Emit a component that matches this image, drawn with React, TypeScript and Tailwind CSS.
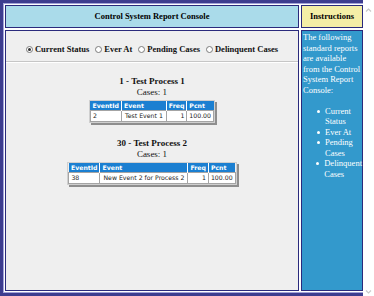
type EventRow = { id: string; event: string; freq: string; pcnt: string };

const processes: { title: string; cases: string; rows: EventRow[] }[] = [
  {
    title: '1 - Test Process 1',
    cases: 'Cases: 1',
    rows: [{ id: '2', event: 'Test Event 1', freq: '1', pcnt: '100.00' }],
  },
  {
    title: '30 - Test Process 2',
    cases: 'Cases: 1',
    rows: [{ id: '38', event: 'New Event 2 for Process 2', freq: '1', pcnt: '100.00' }],
  },
];

const Radio = ({ checked, label }: { checked?: boolean; label: string }) => (
  <span className="flex items-center">
    <span className="w-[7px] h-[7px] rounded-full border border-[#7c7c7c] bg-white flex items-center justify-center mr-[2px]">
      {checked && <span className="w-[3px] h-[3px] rounded-full bg-[#333]" />}
    </span>
    <span>{label}</span>
  </span>
);

const EventTable = ({ rows }: { rows: EventRow[] }) => (
  <div className="inline-block border border-[#cfcfcf] shadow-[2px_2px_0_#8e8e8e]">
    <table className="border-collapse font-['DejaVu_Sans',sans-serif] text-[6.2px] text-left">
      <thead>
        <tr className="bg-[#1b7fd1] text-white">
          <th className="px-[2px] leading-[9px] font-bold border-r border-white">EventId</th>
          <th className="px-[2px] leading-[9px] font-bold border-r border-white">Event</th>
          <th className="px-[2px] leading-[9px] font-bold border-r border-white">Freq</th>
          <th className="px-[2px] leading-[9px] font-bold">Pcnt</th>
        </tr>
      </thead>
      <tbody>
        {rows.map((r) => (
          <tr key={r.id} className="bg-white text-[#222]">
            <td className="px-[2px] py-[1px] leading-[8px] border border-[#a4a4a4]">{r.id}</td>
            <td className="px-[3px] py-[1px] leading-[8px] border border-[#a4a4a4] whitespace-nowrap">{r.event}</td>
            <td className="px-[2px] py-[1px] leading-[8px] border border-[#a4a4a4] text-right">{r.freq}</td>
            <td className="px-[2px] py-[1px] leading-[8px] border border-[#a4a4a4] text-right">{r.pcnt}</td>
          </tr>
        ))}
      </tbody>
    </table>
  </div>
);

export default function App() {
  return (
    <div className="w-[374px] h-[296px] flex bg-white overflow-hidden font-['Liberation_Serif',serif] text-black">
      {/* frame */}
      <div className="w-[363px] h-[296px] border-l-[3px] border-t-[3px] border-b-[3px] border-[#3d3d8f]">
        <div className="h-full border-l border-t border-b border-[#a3a3d9] bg-white p-[1px] pr-0 grid grid-cols-[294px_62px] grid-rows-[23px_1fr] gap-[2px]">
          <div className="border border-[#2a2a7c] bg-[#aadbea] flex items-center justify-center text-[8.5px] font-bold">
            Control System Report Console
          </div>
          <div className="border border-[#2a2a7c] bg-[#f4eea6] flex items-center justify-center text-[8.5px] font-bold">
            Instructions
          </div>

          {/* left body */}
          <div className="border border-[#2a2a7c] bg-[#efefef] flex flex-col">
            <div className="h-[30px] pt-[6px] flex items-center justify-center gap-[6px] text-[8.5px] font-bold text-[#111]">
              <Radio checked label="Current Status" />
              <Radio label="Ever At" />
              <Radio label="Pending Cases" />
              <Radio label="Delinquent Cases" />
            </div>
            <div className="border-t border-[#c6c6c6] border-b border-b-white" />

            <div className="flex flex-col items-center pt-[13px] gap-[8px]">
              {processes.map((p) => (
                <div key={p.title} className="flex flex-col items-center text-[#111]">
                  <div className="text-[9px] font-bold leading-[11px]">{p.title}</div>
                  <div className="text-[9px] leading-[11px]">{p.cases}</div>
                  <div className="mt-[2px]">
                    <EventTable rows={p.rows} />
                  </div>
                </div>
              ))}
            </div>
          </div>

          {/* right body */}
          <div className="border border-[#2a2a7c] bg-[#3399cc] text-white text-[8.5px] leading-[10.5px] pl-[1px] pt-[1px]">
            <div className="whitespace-nowrap">
              The following<br />
              standard reports<br />
              are available<br />
              from the Control<br />
              System Report<br />
              Console:
            </div>
            <ul className="mt-[10.5px] whitespace-nowrap">
              {[['Current', 'Status'], ['Ever At'], ['Pending', 'Cases'], ['Delinquent', 'Cases']].map((item) => (
                <li key={item[0]} className="flex">
                  <span className="w-[22px] flex justify-end pr-[5px] pt-[4px]">
                    <span className="w-[3px] h-[3px] rounded-full bg-white" />
                  </span>
                  <span>
                    {item.map((line, i) => (
                      <span key={line + i} className="block">{line}</span>
                    ))}
                  </span>
                </li>
              ))}
            </ul>
          </div>
        </div>
      </div>

      {/* scrollbar */}
      <div className="flex-1 flex flex-col justify-between items-center pt-[7px] pb-[1px]">
        <svg width="7" height="6" viewBox="0 0 7 6">
          <path d="M1 4.5 L3.5 2 L6 4.5" fill="none" stroke="#c9c9c9" strokeWidth="1.2" />
        </svg>
        <svg width="7" height="6" viewBox="0 0 7 6">
          <path d="M1 1.5 L3.5 4 L6 1.5" fill="none" stroke="#c9c9c9" strokeWidth="1.2" />
        </svg>
      </div>
    </div>
  );
}
